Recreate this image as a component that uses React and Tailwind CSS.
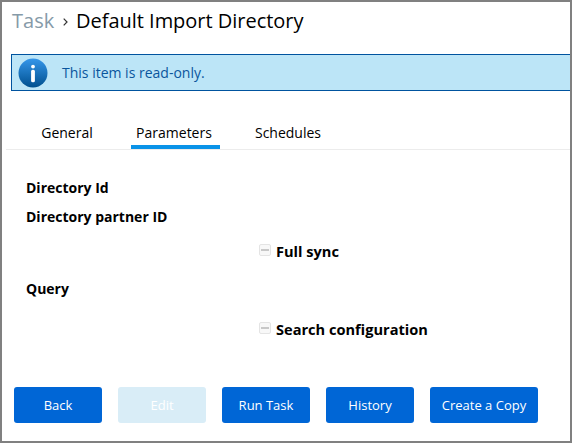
const tabs = [
  { label: "General", width: "w-[80px]", active: false },
  { label: "Parameters", width: "w-[89px]", active: true },
  { label: "Schedules", width: "w-[94px]", active: false },
];

const actions = [
  { label: "Back", width: "w-[88px]" },
  { label: "Edit", width: "w-[88px]", disabled: true },
  { label: "Run Task", width: "w-[88px]" },
  { label: "History", width: "w-[88px]" },
  { label: "Create a Copy", width: "w-[108px]" },
];

function InfoIcon() {
  return (
    <svg width="30" height="30" viewBox="0 0 30 30" className="shrink-0">
      <defs>
        <linearGradient id="info" x1="0" y1="0" x2="0" y2="1">
          <stop offset="0" stopColor="#3596ea" />
          <stop offset="1" stopColor="#00508f" />
        </linearGradient>
      </defs>
      <circle cx="15" cy="15" r="14.5" fill="url(#info)" />
      <circle cx="15" cy="8.6" r="1.9" fill="#fff" />
      <rect x="13.1" y="11.7" width="3.8" height="12.6" rx="1.6" fill="#fff" />
    </svg>
  );
}

function Toggle({ label }) {
  return (
    <div className="flex h-5 items-start pl-[257px]">
      <span className="mt-[2px] flex h-3 w-3 items-center justify-center rounded-[2px] border border-[#e4e4e4] bg-[#f8f8f8]">
        <span className="h-[2px] w-2 bg-[#c8c8c8]" />
      </span>
      <span className="ml-[5px] text-[14.6px] leading-[18px]">{label}</span>
    </div>
  );
}

export default function App() {
  return (
    <div className="flex h-[443px] w-[572px] flex-col overflow-hidden border-2 border-[#808080] bg-white font-['Open_Sans',sans-serif] whitespace-nowrap text-black">
      <header className="flex h-[52px] items-start pt-[5px] pl-[10px] text-[20px] leading-7">
        <span className="w-[43px] text-[#869aa8]">Task</span>
        <svg width="5" height="8" viewBox="0 0 5 8" className="mt-[11px] ml-[8px]">
          <path d="M0.7 0.7L4 4L0.7 7.3" fill="none" stroke="#333" strokeWidth="1.2" />
        </svg>
        <h1 className="ml-[8px] tracking-[-0.02px]">Default Import Directory</h1>
      </header>

      <div className="ml-[9px] flex h-[37px] shrink-0 items-center border border-r-0 border-[#00539f] bg-[#bce5f7] pl-[6px] text-[14px] text-[#0a559d]">
        <InfoIcon />
        <span className="ml-[14px]">This item is read-only.</span>
      </div>

      <nav className="ml-1 flex h-[59px] shrink-0 items-end border-b border-[#ececec] pl-[21px]">
        {tabs.map((tab) => (
          <div
            key={tab.label}
            className={`mr-[21px] flex h-[31px] justify-center border-b-4 pt-[2px] text-[14px] leading-[26px] first:mr-6 ${tab.width} ${tab.active ? "border-[#0a93e8] pr-[3px]" : "border-transparent"}`}
          >
            {tab.label}
          </div>
        ))}
      </nav>

      <main className="flex h-[237px] shrink-0 flex-col pt-[28px] text-[14px] leading-5 font-bold">
        <div className="pl-6">Directory Id</div>
        <div className="mt-[9px] pl-6">Directory partner ID</div>
        <div className="mt-[15px]">
          <Toggle label="Full sync" />
        </div>
        <div className="mt-[17px] pl-6">Query</div>
        <div className="mt-[21px]">
          <Toggle label="Search configuration" />
        </div>
      </main>

      <footer className="flex gap-4 pl-3">
        {actions.map((action) => (
          <button
            key={action.label}
            disabled={action.disabled}
            className={`h-9 rounded-[3px] pt-[2px] text-[13px] text-white ${action.width} ${action.disabled ? "bg-[#d9edf7]" : "bg-[#0066d6]"}`}
          >
            {action.label}
          </button>
        ))}
      </footer>
    </div>
  );
}
